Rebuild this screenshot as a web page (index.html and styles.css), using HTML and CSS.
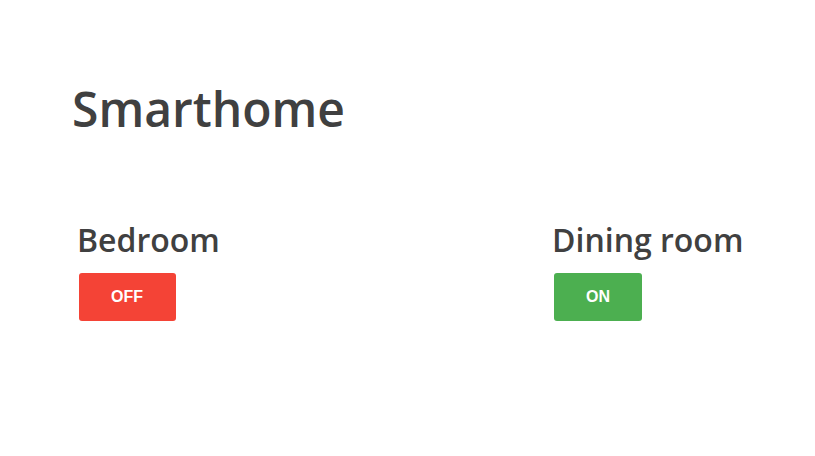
FILE: index.html
```html
<!DOCTYPE html>
<html>
<head>
<meta charset="utf-8">
<link rel="stylesheet" href="styles.css">
</head>
<body>
<main class="page">
  <h1 class="title">Smarthome</h1>
  <section class="rooms">
    <div class="room">
      <h2 class="room-name">Bedroom</h2>
      <button class="toggle toggle-off">OFF</button>
    </div>
    <div class="room">
      <h2 class="room-name">Dining room</h2>
      <button class="toggle toggle-on">ON</button>
    </div>
  </section>
</main>
</body>
</html>
```
FILE: styles.css
```css
html, body {
  margin: 0;
  padding: 0;
  background: #ffffff;
}
.page {
  padding: 80px 70px 0 70px;
  font-family: "Open Sans", sans-serif;
  color: #404040;
}
.title {
  margin: 0 0 0 2px;
  font-size: 48px;
  font-weight: 600;
  line-height: 1.2;
}
.rooms {
  display: grid;
  grid-template-columns: 475px 1fr;
  padding-left: 7px;
  margin-top: 83px;
}
.room {
  display: flex;
  flex-direction: column;
  align-items: flex-start;
}
.room-name {
  margin: 0 0 14px 0;
  font-size: 32px;
  font-weight: 600;
  line-height: 1.2;
}
.toggle {
  margin-left: 2px;
  height: 48px;
  padding: 0 32px;
  border: none;
  border-radius: 3px;
  color: #ffffff;
  font-family: "Liberation Sans", Arial, sans-serif;
  font-weight: bold;
  font-size: 16px;
  cursor: pointer;
}
.toggle-off {
  background: #f44336;
  padding-right: 33px;
}
.toggle-on {
  background: #4caf50;
}
```
